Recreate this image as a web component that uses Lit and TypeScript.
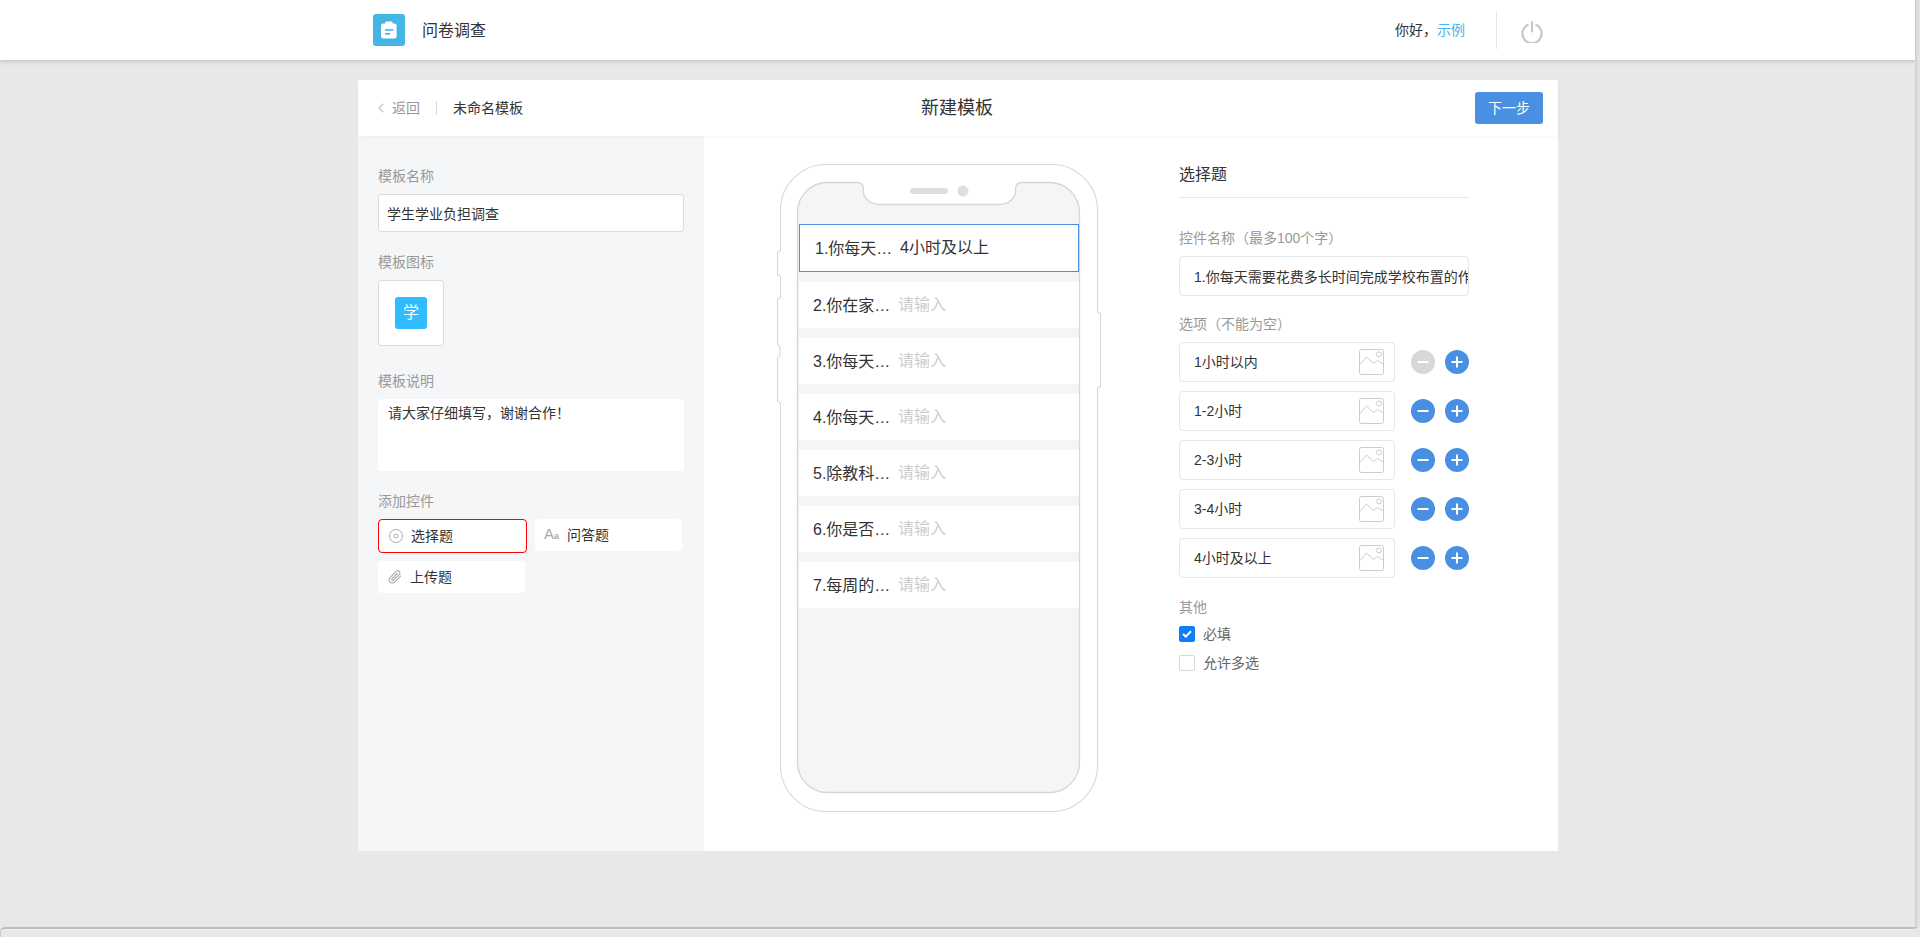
import { LitElement, html, css, svg } from "lit";
import { customElement, state } from "lit/decorators.js";

const QUESTIONS = [
  "1.你每天需要花费多长时间完成学校布置的作业？",
  "2.你在家完成作业时是否需要家长辅导？",
  "3.你每天的睡眠时间大约是多长？",
  "4.你每天的课外活动时间大约是多长？",
  "5.除教科书以外你还使用多少教辅资料？",
  "6.你是否参加校外的课程辅导班？",
  "7.每周的考试和测验次数大约是多少？",
];
const OPTIONS = ["1小时以内", "1-2小时", "2-3小时", "3-4小时", "4小时及以上"];

const imageIcon = svg`<svg class="img-ic" viewBox="0 0 25 26" width="25" height="26" fill="none" stroke="#ccc" stroke-width="1">
  <rect x="0.5" y="0.5" width="24" height="25" rx="2"/>
  <circle cx="20" cy="5.4" r="2.5"/>
  <polyline points="1,15.5 7.5,8 14.5,14.5 18.5,11.5 24,15"/>
</svg>`;

const phoneFrame = svg`<svg class="frame" viewBox="0 0 330 660" width="330" height="660" fill="none">
  <path stroke="#d8d8d8" stroke-width="1.1" d="M51.5 4.5H276.5A46 46 0 0 1 322.5 50.5V151Q322.5 153 325.5 153.5V226.5Q322.5 227 322.5 229V605.5A46 46 0 0 1 276.5 651.5H51.5A46 46 0 0 1 5.5 605.5V244Q5.5 242 2.5 241.5V198Q2.5 197 5 196V187Q5 185.5 2.5 184.5V140Q2.5 139 5.5 137.5V117Q5.5 115.5 2.5 114.5V93Q2.5 92 5.5 90.5V50.5A46 46 0 0 1 51.5 4.5Z"/>
  <path fill="#f5f5f5" stroke="#d6d6d6" stroke-width="1.3" d="M52.5 22.5H82Q88.3 22.5 88.3 29V31C88.3 38.5 96 44.5 104 44.5H225C233 44.5 240.5 38.5 240.5 31V29Q240.5 22.5 247 22.5H274.5A30 30 0 0 1 304.5 52.5V602.5A30 30 0 0 1 274.5 632.5H52.5A30 30 0 0 1 22.5 602.5V52.5A30 30 0 0 1 52.5 22.5Z"/>
  <rect x="135" y="28" width="38" height="6" rx="3" fill="#dedede"/>
  <circle cx="188" cy="31" r="5.5" fill="#dedede"/>
</svg>`;

@customElement("app-root")
export class AppRoot extends LitElement {
  @state() private required = true;
  @state() private multi = false;

  static styles = css`
    :host {
      display: grid;
      grid-template-columns: 1fr 5px;
      grid-template-rows: 1fr 10px;
      width: 1920px;
      height: 937px;
      overflow: hidden;
      background: #e7e8ea;
      color: #333;
      font: 14px/20px "Liberation Sans", "Noto Sans CJK SC", sans-serif;
    }
    * { box-sizing: border-box; }
    input, textarea { font: inherit; color: inherit; outline: none; background: transparent; border: none; }
    .page { min-width: 0; overflow: hidden; }
    .vbar { background: linear-gradient(90deg, #c9cacc 0, #dcdddf 40%, #e4e5e7 100%); }
    .hbar {
      grid-column: 1 / 3;
      background: #e7e8ea;
      border-top: 2px solid #bdbec0;
      border-left: 1px solid #c9cacc;
      border-right: 6px solid #e7e8ea;
      border-radius: 5px 5px 0 0;
      box-shadow: inset 0 1px 0 #eeeff0;
    }

    .topbar {
      display: flex;
      align-items: center;
      height: 60px;
      padding: 0 372px 0 373px;
      background: #fff;
      box-shadow: 0 2px 4px rgba(0, 0, 0, 0.14);
      position: relative;
    }
    .logo { width: 32px; height: 32px; display: block; }
    .brand { margin: 1px 0 0 17px; font-size: 16px; color: #333; }
    .user { margin-left: auto; }
    .user a { color: #45b5e6; text-decoration: none; }
    .vline { width: 1px; height: 38px; background: #e6e6e6; margin: 0 24px 0 31px; }
    .power { width: 22px; height: 22px; display: block; margin-top: 3px; }

    .card { width: 1200px; height: 771px; margin: 20px 0 0 358px; background: #fff; display: flex; flex-direction: column; }
    .card-head {
      flex: none;
      display: grid;
      grid-template-columns: 1fr auto 1fr;
      align-items: center;
      height: 56px;
      padding: 0 15px 0 13px;
      background: #fff;
      box-shadow: 0 2px 4px rgba(0, 0, 0, 0.03);
      position: relative;
    }
    .crumbs { display: flex; align-items: center; padding-left: 7px; }
    .back { display: flex; align-items: center; color: #999; }
    .back svg { margin-right: 8px; }
    .sep { width: 1px; height: 14px; background: #d8d8d8; margin: 0 16px 0 16px; }
    .page-title { font-size: 18px; color: #333; }
    .next {
      justify-self: end;
      width: 68px;
      height: 32px;
      border: none;
      border-radius: 3px;
      background: #4a90e2;
      color: #fff;
      font: inherit;
    }

    .body { flex: 1; display: flex; min-height: 0; }
    .side { width: 346px; flex: none; padding: 30px 20px 0; background: #f5f6f8; }
    .label { color: #999; height: 20px; margin-bottom: 8px; }
    .side-input {
      display: block;
      width: 306px;
      height: 38px;
      padding: 0 8px;
      background: #fff;
      border: 1px solid #dcdcdc;
      border-radius: 3px;
      margin-bottom: 20px;
    }
    .icon-box {
      width: 66px;
      height: 66px;
      display: flex;
      align-items: center;
      justify-content: center;
      background: #fff;
      border: 1px solid #dcdcdc;
      border-radius: 3px;
      margin-bottom: 25px;
    }
    .icon-tile {
      width: 32px;
      height: 32px;
      border-radius: 3px;
      background: #2fbdff;
      color: #fff;
      font-size: 16px;
      line-height: 31px;
      text-align: center;
    }
    .side-text {
      display: block;
      width: 306px;
      height: 72px;
      padding: 4px 10px;
      background: #fff;
      border-radius: 3px;
      resize: none;
      margin-bottom: 20px;
    }
    .widgets { display: grid; grid-template-columns: 147px 147px; grid-auto-rows: 32px; gap: 10px; }
    .widget {
      display: flex;
      align-items: center;
      background: #fff;
      border-radius: 4px;
      padding-left: 10px;
    }
    .widget svg, .widget .aa { flex: none; margin-right: 8px; }
    .widget.active {
      width: 149px;
      height: 34px;
      border: 1px solid #f00;
      padding-left: 10px;
      z-index: 1;
    }
    .aa { width: 15px; color: #aaa; font-size: 15px; line-height: 20px; white-space: nowrap; margin-left: -1px; }
    .aa small { font-size: 9px; font-weight: bold; }

    .stage { flex: 1; display: flex; padding: 24px 0 0 71px; min-width: 0; }
    .phone { position: relative; width: 330px; height: 660px; flex: none; padding: 64px 0 0 24px; margin-right: 74px; }
    .frame { position: absolute; left: 0; top: 0; }
    .rows { position: relative; display: flex; flex-direction: column; gap: 10px; width: 280px; }
    .row {
      display: flex;
      align-items: center;
      height: 46px;
      padding-left: 14px;
      background: #fff;
      font-size: 16px;
    }
    .row.on { height: 48px; padding-left: 15px; border: 1px solid #4a90e2; }
    .qname {
      width: 78px;
      flex: none;
      margin-top: 2px;
      white-space: nowrap;
      overflow: hidden;
      text-overflow: ellipsis;
      color: #333;
    }
    .row input { flex: 1; min-width: 0; margin-left: 7px; padding: 0; font-size: 16px; color: #333; }
    .row input::placeholder { color: #ccc; opacity: 1; }

    .panel { width: 290px; flex: none; padding-top: 4px; }
    .panel-title { font-size: 16px; line-height: 22px; padding-bottom: 11px; border-bottom: 1px solid #e6e6e6; margin-bottom: 30px; }
    .field {
      display: block;
      width: 290px;
      height: 40px;
      padding: 0 0 0 14px;
      background: #fff;
      border: 1px solid #e6e6e6;
      border-radius: 4px;
      margin-bottom: 18px;
    }
    .opts { display: flex; flex-direction: column; gap: 9px; margin-bottom: 19px; }
    .opt { display: flex; align-items: center; }
    .opt-box {
      width: 216px;
      height: 40px;
      display: flex;
      align-items: center;
      padding-right: 10px;
      border: 1px solid #e6e6e6;
      border-radius: 4px;
    }
    .opt-box input { flex: 1; min-width: 0; padding: 0 0 0 14px; }
    .img-ic { flex: none; display: block; }
    .round {
      width: 24px;
      height: 24px;
      padding: 0;
      border: none;
      border-radius: 50%;
      background: #4a90e2;
      display: flex;
      align-items: center;
      justify-content: center;
      margin-left: 10px;
    }
    .round.minus { margin-left: 16px; }
    .round.off { background: #d8d8d8; }
    .panel .label.other { margin-bottom: 9px; }
    .check { display: flex; align-items: center; height: 16px; color: #666; margin-bottom: 13px; }
    .box {
      width: 16px;
      height: 16px;
      margin-right: 8px;
      padding: 0;
      border: 1px solid #d8d8d8;
      border-radius: 2px;
      background: #fff;
      display: flex;
      align-items: center;
      justify-content: center;
    }
    .box.on { background: #0d7ffb; border-color: #0d7ffb; }
  `;

  private roundBtn(kind: "minus" | "plus", off = false) {
    return html`<button class="round ${kind} ${off ? "off" : ""}" aria-label=${kind}>
      <svg width="14" height="14" viewBox="0 0 14 14" stroke="#fff" stroke-width="2" fill="none">
        <path d=${kind === "plus" ? "M1.5 7H12.5M7 1.5V12.5" : "M1.5 7H12.5"} />
      </svg>
    </button>`;
  }

  render() {
    return html`
      <div class="page">
        <header class="topbar">
          <svg class="logo" viewBox="0 0 32 32">
            <rect width="32" height="32" rx="3" fill="#45b5e6" />
            <rect x="8" y="9.5" width="15.6" height="15" rx="2.2" fill="#fff" />
            <rect x="12" y="7.5" width="7.6" height="4.4" rx="1.2" fill="#fff" />
            <rect x="12" y="15.2" width="8.4" height="1.6" fill="#45b5e6" />
            <rect x="12" y="19" width="5.2" height="1.6" fill="#45b5e6" />
          </svg>
          <span class="brand">问卷调查</span>
          <span class="user">你好，<a>示例</a></span>
          <span class="vline"></span>
          <svg class="power" viewBox="0 0 22 22" fill="none" stroke="#c8c8c8" stroke-width="2.2" stroke-linecap="round">
            <path d="M6.6 4.1A9.6 9.6 0 1 0 15.4 4.1" />
            <path d="M11 1V10.5" />
          </svg>
        </header>

        <section class="card">
          <div class="card-head">
            <div class="crumbs">
              <span class="back">
                <svg width="6" height="10" viewBox="0 0 6 10" fill="none" stroke="#ccc" stroke-width="1.5"><path d="M5.3 .7L1 5L5.3 9.3" /></svg>
                返回
              </span>
              <span class="sep"></span>
              <span>未命名模板</span>
            </div>
            <div class="page-title">新建模板</div>
            <button class="next">下一步</button>
          </div>

          <div class="body">
            <aside class="side">
              <div class="label">模板名称</div>
              <input class="side-input" .value=${"学生学业负担调查"} />
              <div class="label">模板图标</div>
              <div class="icon-box"><div class="icon-tile">学</div></div>
              <div class="label">模板说明</div>
              <textarea class="side-text" .value=${"请大家仔细填写，谢谢合作！"}></textarea>
              <div class="label">添加控件</div>
              <div class="widgets">
                <div class="widget active">
                  <svg width="14" height="14" viewBox="0 0 14 14" fill="none" stroke="#aaa"><circle cx="7" cy="7" r="6.5" /><circle cx="7" cy="7" r="2" /></svg>
                  <span>选择题</span>
                </div>
                <div class="widget">
                  <span class="aa">A<small>a</small></span>
                  <span>问答题</span>
                </div>
                <div class="widget">
                  <svg width="14" height="14" viewBox="0 0 14 14" fill="none" stroke="#aaa" stroke-width="1.1" stroke-linecap="round">
                    <path d="M12.6 6.2L6.7 12.1A3.2 3.2 0 0 1 2.1 7.6L8.3 1.4A2.1 2.1 0 0 1 11.3 4.4L5.6 10.1A1 1 0 0 1 4.1 8.7L9.3 3.5" />
                  </svg>
                  <span>上传题</span>
                </div>
              </div>
            </aside>

            <div class="stage">
              <div class="phone">
                ${phoneFrame}
                <div class="rows">
                  ${QUESTIONS.map(
                    (q, i) => html`<div class="row ${i === 0 ? "on" : ""}">
                      <span class="qname">${q}</span>
                      <input placeholder="请输入" .value=${i === 0 ? "4小时及以上" : ""} />
                    </div>`
                  )}
                </div>
              </div>

              <div class="panel">
                <div class="panel-title">选择题</div>
                <div class="label">控件名称（最多100个字）</div>
                <input class="field" .value=${QUESTIONS[0]} />
                <div class="label">选项（不能为空）</div>
                <div class="opts">
                  ${OPTIONS.map(
                    (o, i) => html`<div class="opt">
                      <div class="opt-box"><input .value=${o} />${imageIcon}</div>
                      ${this.roundBtn("minus", i === 0)}${this.roundBtn("plus")}
                    </div>`
                  )}
                </div>
                <div class="label other">其他</div>
                <label class="check" @click=${() => (this.required = !this.required)}>
                  <span class="box ${this.required ? "on" : ""}">
                    ${this.required
                      ? html`<svg width="10" height="8" viewBox="0 0 10 8" fill="none" stroke="#fff" stroke-width="2"><path d="M1 4L3.8 6.6L9 1.2" /></svg>`
                      : ""}
                  </span>
                  必填
                </label>
                <label class="check" @click=${() => (this.multi = !this.multi)}>
                  <span class="box ${this.multi ? "on" : ""}"></span>
                  允许多选
                </label>
              </div>
            </div>
          </div>
        </section>
      </div>
      <div class="vbar"></div>
      <div class="hbar"></div>
    `;
  }
}
